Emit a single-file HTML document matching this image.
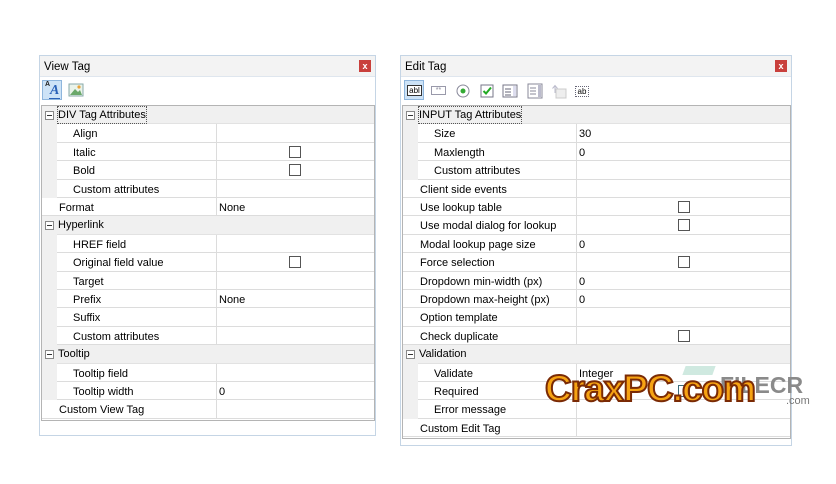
<!DOCTYPE html>
<html><head><meta charset="utf-8">
<style>
*{box-sizing:border-box;margin:0;padding:0}
body{width:836px;height:484px;background:#fff;position:relative;overflow:hidden;font-family:"Liberation Sans",Tahoma,sans-serif;font-size:11px;color:#000}
.panel{position:absolute;border:1px solid #c5d5e5;background:#fff}
.title{position:absolute;left:0;right:0;top:0;height:21px;background:#f3f3f3;border-bottom:1px solid #dfe6ee;padding:5px 4px;font-size:11.5px}
.x{position:absolute;right:4px;top:4px;width:12px;height:12px;background:#c9403c;color:#fff;font-size:9px;font-weight:bold;text-align:center;line-height:12px}
.tb{position:absolute;left:0;right:0;top:22px;height:25px;background:#fff}
.grid{position:absolute;border:1px solid #b4b4b4;background:#fff;overflow:hidden}
.r{position:absolute;left:0;right:0;height:18.4px;border-bottom:1px solid #dcdcdc;line-height:20px}
.h{background:#f0f0f0;border-bottom:1px solid #e2e2e2}
.h .pm{position:absolute;left:3px;top:5px;width:9px;height:9px;border:1px solid #888;background:#fff}
.h .pm:after{content:"";position:absolute;left:1px;top:3px;width:5px;height:1px;background:#333}
.h span{position:absolute;left:16px;top:1px;line-height:16px}
.s:before{content:"";position:absolute;left:0;top:-1px;width:15px;height:19.4px;background:#f0f0f0}
.n{position:absolute;top:0;height:100%}
.v{position:absolute;top:0;bottom:0;border-left:1px solid #dcdcdc;padding-left:2px}
.cb{position:absolute;top:3px;width:12px;height:12px;border:1px solid #555;background:#fff}
.ic{position:absolute;top:5px;width:16px;height:16px}
</style></head><body>

<div class="panel" style="left:39px;top:55px;width:337px;height:381px">
 <div class="title">View Tag<div class="x">x</div></div>
 <div class="tb">
  <div style="position:absolute;left:2px;top:2px;width:20px;height:20px;background:#cde3f7;border:1px solid #8fb6dd"></div>
  <div style="position:absolute;left:5px;top:3px;font-size:7px;font-weight:bold;color:#222">A</div>
  <div style="position:absolute;left:10px;top:5px;font-size:14px;font-style:italic;font-weight:bold;color:#2a62b8;font-family:'Liberation Serif',serif">A</div>
  <div style="position:absolute;left:9px;top:20px;width:11px;height:1px;background:#2a62b8"></div>
  <svg style="position:absolute;left:28px;top:4px" width="16" height="16"><rect x="1" y="2" width="14" height="12" fill="#eaf3ea" stroke="#8aa"/><path d="M2 13 L7 7 L10 10 L12 8 L14 13Z" fill="#6aa86a"/><circle cx="11" cy="5" r="1.6" fill="#e8a33a"/></svg>
 </div>
 <div class="grid" style="left:1px;top:49px;width:334px;height:316px">
  <div class="r h" style="top:0"><div class="pm"></div><span style="outline:1px dotted #555">DIV Tag Attributes</span></div>
  <div class="r s" style="top:18.4px"><span class="n" style="left:31px">Align</span><div class="v" style="left:174px;right:0"></div></div>
  <div class="r s" style="top:36.8px"><span class="n" style="left:31px">Italic</span><div class="v" style="left:174px;right:0"><div class="cb" style="left:72px"></div></div></div>
  <div class="r s" style="top:55.2px"><span class="n" style="left:31px">Bold</span><div class="v" style="left:174px;right:0"><div class="cb" style="left:72px"></div></div></div>
  <div class="r s" style="top:73.6px"><span class="n" style="left:31px">Custom attributes</span><div class="v" style="left:174px;right:0"></div></div>
  <div class="r" style="top:92px"><span class="n" style="left:17px">Format</span><div class="v" style="left:174px;right:0">None</div></div>
  <div class="r h" style="top:110.4px"><div class="pm"></div><span>Hyperlink</span></div>
  <div class="r s" style="top:128.8px"><span class="n" style="left:31px">HREF field</span><div class="v" style="left:174px;right:0"></div></div>
  <div class="r s" style="top:147.2px"><span class="n" style="left:31px">Original field value</span><div class="v" style="left:174px;right:0"><div class="cb" style="left:72px"></div></div></div>
  <div class="r s" style="top:165.6px"><span class="n" style="left:31px">Target</span><div class="v" style="left:174px;right:0"></div></div>
  <div class="r s" style="top:184px"><span class="n" style="left:31px">Prefix</span><div class="v" style="left:174px;right:0">None</div></div>
  <div class="r s" style="top:202.4px"><span class="n" style="left:31px">Suffix</span><div class="v" style="left:174px;right:0"></div></div>
  <div class="r s" style="top:220.8px"><span class="n" style="left:31px">Custom attributes</span><div class="v" style="left:174px;right:0"></div></div>
  <div class="r h" style="top:239.2px"><div class="pm"></div><span>Tooltip</span></div>
  <div class="r s" style="top:257.6px"><span class="n" style="left:31px">Tooltip field</span><div class="v" style="left:174px;right:0"></div></div>
  <div class="r s" style="top:276px"><span class="n" style="left:31px">Tooltip width</span><div class="v" style="left:174px;right:0">0</div></div>
  <div class="r" style="top:294.4px"><span class="n" style="left:17px">Custom View Tag</span><div class="v" style="left:174px;right:0"></div></div>
 </div>
</div>

<div class="panel" style="left:400px;top:55px;width:392px;height:391px">
 <div class="title">Edit Tag<div class="x">x</div></div>
 <div class="tb">
  <div style="position:absolute;left:3px;top:2px;width:20px;height:20px;background:#cde3f7;border:1px solid #8fb6dd"></div>
  <div style="position:absolute;left:6px;top:7px;width:15px;height:11px;border:1px solid #333;background:#fff;font-size:8px;line-height:9px;text-align:center">abl</div>
  <div style="position:absolute;left:30px;top:8px;width:15px;height:9px;border:1px solid #99a;font-size:7px;line-height:7px;color:#889;text-align:center">**</div>
  <svg class="ic" style="left:54px" viewBox="0 0 16 16"><circle cx="8" cy="8" r="6" fill="#fff" stroke="#889"/><circle cx="8" cy="8" r="2.5" fill="#3a3"/></svg>
  <svg class="ic" style="left:78px" viewBox="0 0 16 16"><rect x="2" y="2" width="12" height="12" fill="#fff" stroke="#778"/><path d="M4.5 8 L7 10.5 L12 4.5" stroke="#2a2" stroke-width="2" fill="none"/></svg>
  <svg class="ic" style="left:101px" viewBox="0 0 16 16"><rect x="1" y="2" width="14" height="12" fill="#fff" stroke="#778"/><path d="M3 6h6M3 9h6M3 12h6" stroke="#667"/><rect x="11" y="3" width="3" height="10" fill="#dde"/></svg>
  <svg class="ic" style="left:126px" viewBox="0 0 16 16"><rect x="1" y="1" width="14" height="14" fill="#fff" stroke="#889"/><path d="M3 5h6M3 8h6M3 11h6" stroke="#889"/><rect x="11" y="2" width="3" height="12" fill="#bbc"/></svg>
  <svg class="ic" style="left:150px" viewBox="0 0 16 16"><rect x="5" y="6" width="10" height="9" fill="#eee" stroke="#ccc"/><path d="M4 10V3M1.5 5.5L4 2.5L6.5 5.5" stroke="#bbc" fill="none"/></svg>
  <div style="position:absolute;left:174px;top:8px;width:14px;height:11px;border:1px dotted #667;font-size:8px;line-height:9px;text-align:center">ab</div>
 </div>
 <div class="grid" style="left:1px;top:49px;width:389px;height:334px">
  <div class="r h" style="top:0"><div class="pm"></div><span style="outline:1px dotted #555">INPUT Tag Attributes</span></div>
  <div class="r s" style="top:18.4px"><span class="n" style="left:31px">Size</span><div class="v" style="left:173px;right:0">30</div></div>
  <div class="r s" style="top:36.8px"><span class="n" style="left:31px">Maxlength</span><div class="v" style="left:173px;right:0">0</div></div>
  <div class="r s" style="top:55.2px"><span class="n" style="left:31px">Custom attributes</span><div class="v" style="left:173px;right:0"></div></div>
  <div class="r" style="top:73.6px"><span class="n" style="left:17px">Client side events</span><div class="v" style="left:173px;right:0"></div></div>
  <div class="r" style="top:92px"><span class="n" style="left:17px">Use lookup table</span><div class="v" style="left:173px;right:0"><div class="cb" style="left:101px"></div></div></div>
  <div class="r" style="top:110.4px"><span class="n" style="left:17px">Use modal dialog for lookup</span><div class="v" style="left:173px;right:0"><div class="cb" style="left:101px"></div></div></div>
  <div class="r" style="top:128.8px"><span class="n" style="left:17px">Modal lookup page size</span><div class="v" style="left:173px;right:0">0</div></div>
  <div class="r" style="top:147.2px"><span class="n" style="left:17px">Force selection</span><div class="v" style="left:173px;right:0"><div class="cb" style="left:101px"></div></div></div>
  <div class="r" style="top:165.6px"><span class="n" style="left:17px">Dropdown min-width (px)</span><div class="v" style="left:173px;right:0">0</div></div>
  <div class="r" style="top:184px"><span class="n" style="left:17px">Dropdown max-height (px)</span><div class="v" style="left:173px;right:0">0</div></div>
  <div class="r" style="top:202.4px"><span class="n" style="left:17px">Option template</span><div class="v" style="left:173px;right:0"></div></div>
  <div class="r" style="top:220.8px"><span class="n" style="left:17px">Check duplicate</span><div class="v" style="left:173px;right:0"><div class="cb" style="left:101px"></div></div></div>
  <div class="r h" style="top:239.2px"><div class="pm"></div><span>Validation</span></div>
  <div class="r s" style="top:257.6px"><span class="n" style="left:31px">Validate</span><div class="v" style="left:173px;right:0">Integer</div></div>
  <div class="r s" style="top:276px"><span class="n" style="left:31px">Required</span><div class="v" style="left:173px;right:0"><div class="cb" style="left:101px;border-color:#3a6a7a"></div></div></div>
  <div class="r s" style="top:294.4px"><span class="n" style="left:31px">Error message</span><div class="v" style="left:173px;right:0"></div></div>
  <div class="r" style="top:312.8px"><span class="n" style="left:17px">Custom Edit Tag</span><div class="v" style="left:173px;right:0"></div></div>
 </div>
</div>

<div style="position:absolute;left:684px;top:366px;width:30px;height:9px;background:#cfe9e0;transform:skewX(-20deg)"></div>
<div style="position:absolute;left:720px;top:372px;font-size:23px;font-weight:bold;color:#8a8a8a">FILECR</div>
<div style="position:absolute;left:786px;top:395px;font-size:11px;color:#777">.com</div>
<div style="position:absolute;left:545px;top:368px;font-size:37px;font-weight:900;font-family:'Liberation Sans',sans-serif;color:#f6a313;-webkit-text-stroke:2px #7a2a05;letter-spacing:-1px">CraxPC.com</div>
</body></html>
